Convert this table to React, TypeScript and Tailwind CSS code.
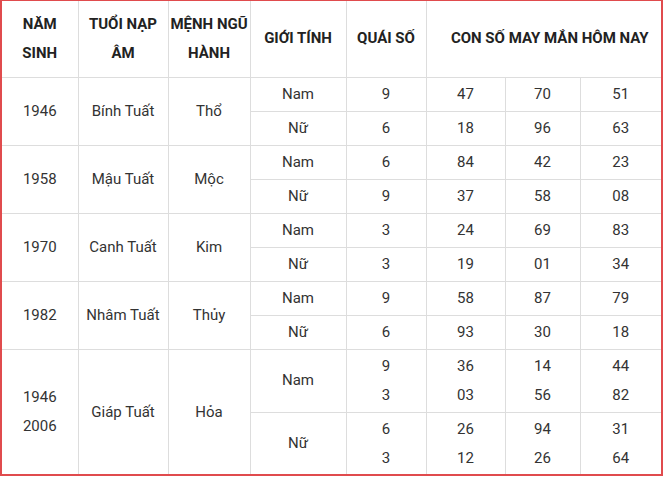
import React from "react";

type Sub = { g: string; q: string[]; n: string[][] };
type Group = { year: string[]; tuoi: string; menh: string; subs: Sub[] };

const data: Group[] = [
  {
    year: ["1946"], tuoi: "Bính Tuất", menh: "Thổ",
    subs: [
      { g: "Nam", q: ["9"], n: [["47"], ["70"], ["51"]] },
      { g: "Nữ", q: ["6"], n: [["18"], ["96"], ["63"]] },
    ],
  },
  {
    year: ["1958"], tuoi: "Mậu Tuất", menh: "Mộc",
    subs: [
      { g: "Nam", q: ["6"], n: [["84"], ["42"], ["23"]] },
      { g: "Nữ", q: ["9"], n: [["37"], ["58"], ["08"]] },
    ],
  },
  {
    year: ["1970"], tuoi: "Canh Tuất", menh: "Kim",
    subs: [
      { g: "Nam", q: ["3"], n: [["24"], ["69"], ["83"]] },
      { g: "Nữ", q: ["3"], n: [["19"], ["01"], ["34"]] },
    ],
  },
  {
    year: ["1982"], tuoi: "Nhâm Tuất", menh: "Thủy",
    subs: [
      { g: "Nam", q: ["9"], n: [["58"], ["87"], ["79"]] },
      { g: "Nữ", q: ["6"], n: [["93"], ["30"], ["18"]] },
    ],
  },
  {
    year: ["1946", "2006"], tuoi: "Giáp Tuất", menh: "Hỏa",
    subs: [
      { g: "Nam", q: ["9", "3"], n: [["36", "03"], ["14", "56"], ["44", "82"]] },
      { g: "Nữ", q: ["6", "3"], n: [["26", "12"], ["94", "26"], ["31", "64"]] },
    ],
  },
];

const td = "border border-[#dddddd] text-center align-middle p-0 py-[2px] leading-[29px] whitespace-nowrap";
const th = "border border-[#dddddd] text-center align-middle p-0 font-bold leading-[29px] whitespace-nowrap";

function Lines({ items }: { items: string[] }) {
  return (
    <>
      {items.map((t, i) => (
        <div key={i}>{t}</div>
      ))}
    </>
  );
}

export default function App() {
  return (
    <div className="w-[664px] h-[477px] bg-white">
      <div
        className="w-[663px] h-[476px] border-2 border-t-[1px] border-[#e04b4d] bg-white text-[15px] text-[#333333] overflow-hidden"
        style={{ fontFamily: "Roboto, 'Noto Sans', Arial, sans-serif" }}
      >
        <table className="w-[659px] border-collapse border-hidden table-fixed">
          <colgroup>
            <col className="w-[76px]" />
            <col className="w-[90px]" />
            <col className="w-[82px]" />
            <col className="w-[96px]" />
            <col className="w-[80px]" />
            <col className="w-[79px]" />
            <col className="w-[75px]" />
            <col className="w-[81px]" />
          </colgroup>
          <thead>
            <tr className="h-[76px] text-[#222222]">
              <th className={th}>NĂM<br />SINH</th>
              <th className={th}>TUỔI NẠP<br />ÂM</th>
              <th className={th}>MỆNH NGŨ<br />HÀNH</th>
              <th className={th}>GIỚI TÍNH</th>
              <th className={th}>QUÁI SỐ</th>
              <th className={th + " pl-3"} colSpan={3}>CON SỐ MAY MẮN HÔM NAY</th>
            </tr>
          </thead>
          <tbody>
            {data.map((grp, gi) =>
              grp.subs.map((s, si) => (
                <tr key={gi + "-" + si}>
                  {si === 0 && (
                    <>
                      <td className={td} rowSpan={2}><Lines items={grp.year} /></td>
                      <td className={td} rowSpan={2}>{grp.tuoi}</td>
                      <td className={td} rowSpan={2}>{grp.menh}</td>
                    </>
                  )}
                  <td className={td}>{s.g}</td>
                  <td className={td}><Lines items={s.q} /></td>
                  {s.n.map((col, ci) => (
                    <td key={ci} className={td}><Lines items={col} /></td>
                  ))}
                </tr>
              ))
            )}
          </tbody>
        </table>
      </div>
    </div>
  );
}
